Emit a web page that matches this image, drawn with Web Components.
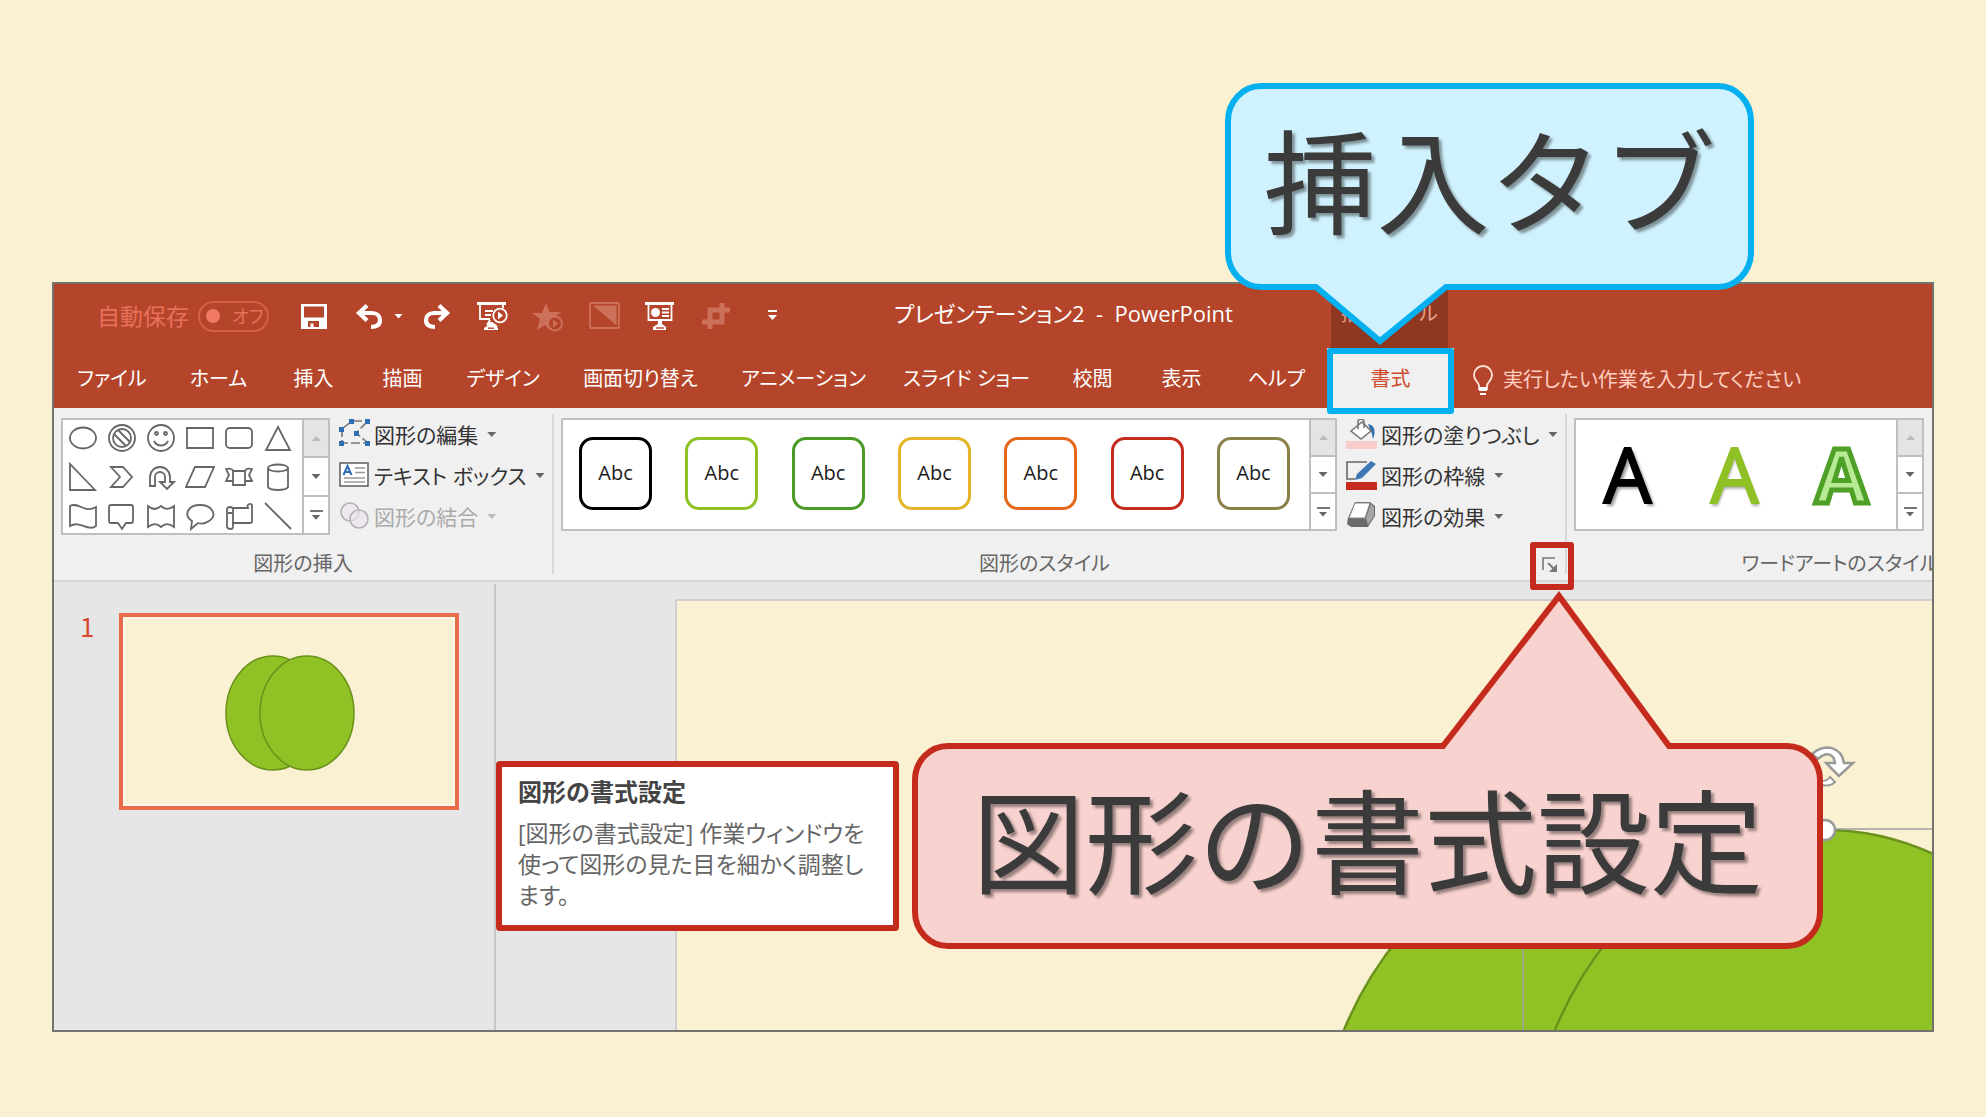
<!DOCTYPE html>
<html lang="ja">
<head>
<meta charset="utf-8">
<title>プレゼンテーション2 - PowerPoint</title>
<style>
  html, body { margin: 0; height: 100%; }
  body {
    background: #faf0d2;
    font-family: "Open Sans", "Noto Sans CJK JP", sans-serif;
    font-feature-settings: "palt";
    font-size: 20px;
    line-height: 30px;
    color: #333;
  }
</style>
</head>
<body>
<tutorial-page></tutorial-page>
<script>
const define = (name, html, setup) => {
  const template = document.createElement('template');
  template.innerHTML = `<style>
    *, *::before, *::after { box-sizing: border-box; }
    :host { display: block; box-sizing: border-box; }
    button, input { font: inherit; font-feature-settings: inherit; color: inherit; background: none; border: 0; padding: 0; margin: 0; }
    svg { display: block; flex: none; }
  </style>` + html;
  customElements.define(name, class extends HTMLElement {
    constructor() {
      super();
      this.attachShadow({ mode: 'open' }).append(template.content.cloneNode(true));
    }
    connectedCallback() { if (setup) setup(this, this.shadowRoot); }
  });
};

/* ---------- icons ---------- */
const icons = {
  save: `<path fill="#fff" fill-rule="evenodd" d="M3 4h26v25H3zM6 6.500v11h20v-11zM10 21v6h2.500v-3.500h3V27H21v-6z"/>`,
  undo: `<path fill="none" stroke="#fff" stroke-width="4.200" d="M4 13h14c5 0 8 3 8 7 0 5-3 7-9 7"/><path fill="none" stroke="#fff" stroke-width="4.200" d="M13 5.500 5 13l8 7.500"/>`,
  redo: `<path fill="none" stroke="#fff" stroke-width="4.200" d="M28 13H14c-5 0-8 3-8 7 0 5 3 7 9 7"/><path fill="none" stroke="#fff" stroke-width="4.200" d="M19 5.500 27 13l-8 7.500"/>`,
  show: `<g fill="none" stroke="#fff" stroke-width="1.800"><path d="M1 3.500h29" stroke-width="3"/><path d="M4 4v15h10M27 4v4M9 11h8M9 15h6M14 20l-3 5M18 24l3 3"/><circle cx="24" cy="15.500" r="6.800"/></g><path fill="#fff" d="M22 11.500v8l5-4zM8 30v-2l3-2 2-4h4l2 4 3 2v2z"/><path d="M12 28.200h6" stroke="#b5452a" stroke-width="1.400"/>`,
  star: `<path fill="#cc705a" d="m14 3 3.500 9H29l-9 7-1 2-1 9-5-5-8 5 3-11-8-6h10z"/><circle cx="23" cy="23.500" r="7" fill="#b5452a" stroke="#cc705a" stroke-width="1.800"/><path fill="#cc705a" d="M21 19.500v8l5-4z"/>`,
  slide: `<rect x="2" y="3" width="29" height="25" rx="1" fill="none" stroke="#cc705a" stroke-width="1.800"/><path fill="#cc705a" d="M5 5.500h23.500v20z"/>`,
  present: `<path d="M1 3.500h29" stroke="#fff" stroke-width="3"/><path d="M4.500 4v16h23V4M18 9h7M18 12.500h7M18 16h7" fill="none" stroke="#fff" stroke-width="1.800"/><circle cx="11.500" cy="12.500" r="4.500" fill="#fff"/><path fill="#fff" d="M14 20h4v4l4 3v3H9v-3l5-3z"/><path d="M12 28h8" stroke="#b5452a" stroke-width="1.400"/>`,
  crop: `<path d="M10 29V10h20M22 3v19H2" fill="none" stroke="#cc705a" stroke-width="5"/><path d="M23 10V3" stroke="#cc705a" stroke-width="2"/>`,
  more: `<path fill="#fff" d="M12 10h9v2h-9zM12 15h9l-4.500 5z"/>`,
  editPoints: `<g stroke="#777" stroke-width="1.600" fill="none"><path d="M3 10 13 2M14 2h13M28 3 17 14l11 9M3 9v15h25" stroke-dasharray="9 3"/></g><g fill="#2f6eb0"><path d="M10 0h5v5h-5zM26 0h5v5h-5zM0 8h5v5H0zM15 12h5v5h-5zM0 22h5v5H0zM26 22h5v5h-5z"/></g>`,
  textBox: `<rect x="1" y="3" width="28" height="23" fill="#fff" stroke="#666" stroke-width="1.600"/><path d="M16 8h10M16 12.500h10M5 18h21M5 22h21" stroke="#999" stroke-width="1.500"/><path d="m4.500 15 4-9 4 9M6 12h5" stroke="#2f6eb0" stroke-width="2" fill="none"/>`,
  merge: `<g fill="#ebe4eb" fill-opacity=".7" stroke="#b5aeb5" stroke-width="1.600"><circle cx="11" cy="11" r="9"/><circle cx="20" cy="18" r="9"/></g>`,
  fill: `<path fill="#f8cdc9" d="M0 22h31v8H0z"/><path fill="#2f6eb0" d="M22 5c7 1 8 8 5 15-1-6-2-8-5-15z"/><path fill="#fff" stroke="#777" stroke-width="1.600" d="m5 12 11-9 9 9-10 8z"/><path d="M12 10V3c0-4 6-4 6 0v6" fill="none" stroke="#777" stroke-width="1.600"/>`,
  outline: `<path fill="#c42b1c" d="M0 22h31v8H0z"/><path d="M21 2H1v17h8" fill="none" stroke="#666" stroke-width="1.600"/><path fill="#3f77b5" d="m9 20 2-6L25 1l5 3-14 14z"/>`,
  effects: `<path fill="#6b6b6b" d="M2 17 9 1h15l5 4v10l-7 11H5l-4-3z"/><path fill="#fff" stroke="#888" d="M9 2h15l-5 15H3z"/><path fill="#a5a5a5" d="m25 3 3 3v9l-6 9-2-7z"/>`,
  bulb: `<path d="M12 25v-3c0-4-5-5-5-11a9 9 0 0 1 18 0c0 6-5 7-5 11v3z" fill="none" stroke="#ffe3da" stroke-width="1.800"/><path fill="#fff" d="M12 23h8v4h-8zM13 29h6v2h-6z"/>`,
  launcher: `<path d="M1 13V1h12" fill="none" stroke="#777" stroke-width="1.600"/><path d="m6 6 7 7" stroke="#777" stroke-width="1.800"/><path fill="#777" d="M15 7v8H7z"/>`,
};
define('ui-icon', `<style>:host { flex: none; }</style>`, (host, root) => {
  const s = host.getAttribute('size') || 32;
  host.style.width = host.style.height = s + 'px';
  const box = document.createElement('div');
  box.innerHTML = `<svg width="${s}" height="${s}" viewBox="0 0 ${s} ${s}" aria-hidden="true">${icons[host.getAttribute('name')]}</svg>`;
  root.append(box);
});

define('caret-mark', `<style>:host { width: 9px; height: 5px; background: currentColor; clip-path: polygon(0 0, 100% 0, 50% 100%); flex: none; }</style>`);

/* ---------- title bar ---------- */
define('title-bar', `<style>
  :host { display: flex; height: 64px; color: #fff; }
  .main { width: 1277px; flex: none; display: flex; align-items: center; padding-left: 43px; }
  .auto { display: flex; align-items: center; gap: 12px; color: #e8705a; font-size: 23px; margin-right: 29px; }
  .auto span { width: 89px; white-space: nowrap; }
  .toggle { width: 71px; height: 31px; border: 2px solid #d75f45; border-radius: 16px; display: flex; align-items: center; gap: 12px; padding-left: 6px; font-size: 18px; line-height: 26px; white-space: nowrap; }
  .toggle::before { content: ""; width: 14px; height: 14px; border-radius: 50%; background: #f07a64; flex: none; }
  .quick { display: flex; align-items: center; gap: 24px; }
  .pair { display: flex; align-items: center; }
  .pair button:nth-child(2) { margin: 0 14px 0 8px; width: 12px; }
  h1 { flex: 1; margin: 0; padding: 0 0 6px 8px; text-align: center; font-size: 22px; font-weight: 400; white-space: pre; }
  .context { width: 117px; background: #8f3720; color: #e6a08c; display: flex; justify-content: center; padding-top: 15px; }
</style>
<div class="main">
  <div class="auto"><span id="auto">自動保存</span><button class="toggle" role="switch" aria-checked="false" aria-labelledby="auto">オフ</button></div>
  <div class="quick">
    <button aria-label="上書き保存"><ui-icon name="save"></ui-icon></button>
    <div class="pair"><button aria-label="元に戻す"><ui-icon name="undo"></ui-icon></button><button aria-label="元に戻す履歴"><caret-mark></caret-mark></button><button aria-label="やり直し"><ui-icon name="redo"></ui-icon></button></div>
    <button aria-label="先頭から開始"><ui-icon name="show"></ui-icon></button>
    <button aria-label="アニメーション"><ui-icon name="star"></ui-icon></button>
    <button aria-label="画面切り替え"><ui-icon name="slide"></ui-icon></button>
    <button aria-label="発表者ツール"><ui-icon name="present"></ui-icon></button>
    <button aria-label="トリミング"><ui-icon name="crop"></ui-icon></button>
    <button aria-label="クイック アクセス"><ui-icon name="more"></ui-icon></button>
  </div>
  <h1>プレゼンテーション2  -  PowerPoint</h1>
</div>
<div class="context">描画ツール</div>`);

/* ---------- tabs ---------- */
define('tab-strip', `<style>
  :host { display: flex; height: 60px; padding-left: 2px; color: #fff; }
  nav { display: flex; }
  nav button { text-align: center; white-space: nowrap; padding-top: 2px; }
  .t2 { width: 89px; } .t3 { width: 101px; } .t4 { width: 112px; } .t6 { width: 163px; }
  .active { position: relative; z-index: 2; width: 127px; background: #f0f0f0; color: #d04a2c; }
  .active::after { content: ""; position: absolute; inset: 0 0 -6px 0; border: 6px solid #05b0f0; border-radius: 3px; }
  label { display: flex; align-items: center; flex: 1; padding: 4px 0 0 13px; gap: 4px; }
  input { flex: 1; min-width: 0; outline: 0; height: 30px; }
  input::placeholder { color: #ffcfc2; opacity: 1; }
</style>
<nav role="tablist">
  <button role="tab" class="t4">ファイル</button><button role="tab" class="t3">ホーム</button><button role="tab" class="t2">挿入</button><button role="tab" class="t2">描画</button><button role="tab" class="t4">デザイン</button><button role="tab" class="t6">画面切り替え</button><button role="tab" class="t6">アニメーション</button><button role="tab" class="t6">スライド ショー</button><button role="tab" class="t2">校閲</button><button role="tab" class="t2">表示</button><button role="tab" class="t3">ヘルプ</button><button role="tab" class="active" aria-selected="true">書式</button>
</nav>
<label><ui-icon name="bulb"></ui-icon><input type="text" aria-label="操作アシスト" placeholder="実行したい作業を入力してください"></label>`);

/* ---------- ribbon pieces ---------- */
define('gallery-box', `<style>
  :host { display: flex; background: #fff; border-radius: 1px; box-shadow: inset 0 0 0 2px #bfbfbf; height: 113px; margin-top: 4px; flex: none; }
  .items { flex: 1; display: flex; min-width: 0; }
  .scroll { width: 28px; display: flex; flex-direction: column; border: 2px solid #bfbfbf; }
  .scroll button { flex: 1; display: flex; flex-direction: column; gap: 3px; align-items: center; justify-content: center; color: #666; }
  .scroll button + button { border-top: 2px solid #bfbfbf; }
  .scroll .up { background: #e4e4e4; }
  .up caret-mark { rotate: 180deg; color: #bbb; }
  i { width: 13px; height: 2px; background: #777; }
</style>
<div class="items"><slot></slot></div>
<div class="scroll"><button class="up" aria-label="上へ"><caret-mark></caret-mark></button><button aria-label="下へ"><caret-mark></caret-mark></button><button aria-label="その他"><i></i><caret-mark></caret-mark></button></div>`);

const shapes = [
  ['楕円', '<ellipse cx="15" cy="15" rx="13" ry="10.500"/>'],
  ['禁止', '<circle cx="15" cy="15" r="13"/><circle cx="15" cy="15" r="9"/><path d="M7 11l12 12M11 7l12 12"/>'],
  ['スマイル', '<circle cx="15" cy="15" r="13"/><circle cx="10.500" cy="10.500" r="1.500"/><circle cx="19.500" cy="10.500" r="1.500"/><path d="M8 18c3 6 11 6 14 0"/>'],
  ['四角形', '<path d="M2 5h26v20H2z"/>'],
  ['角丸四角形', '<rect x="2" y="5" width="26" height="20" rx="4"/>'],
  ['三角形', '<path d="M15 4l12 23H3z"/>'],
  ['直角三角形', '<path d="M2 2v26h25z"/>'],
  ['山形', '<path d="M4 5h12l9 10-9 10H4l9-10z"/>'],
  ['Uターン矢印', '<path d="M4 24V15a10 10 0 0 1 20 0v5h4l-7 7-7-7h5v-5a5 5 0 0 0-10 0v9z"/>'],
  ['平行四辺形', '<path d="M10 5h19l-9 20H1z"/>'],
  ['リボン', '<path d="M9 9v14h12V9zM9 19H2l3-6-3-6c3-1 7 0 7 2M21 19h7l-3-6 3-6c-3-1-7 0-7 2"/>'],
  ['円柱', '<ellipse cx="15" cy="6" rx="10" ry="3.500"/><path d="M5 6v19c2 4 18 4 20 0V6"/>'],
  ['波', '<path d="M2 5c8-5 14 8 26 1v19c-8 6-16-6-26 0z"/>'],
  ['四角形吹き出し', '<path d="M4 4h20q2 0 2 2v14q0 2-2 2h-5l-4 6-4-6H4q-2 0-2-2V6q0-2 2-2z"/>'],
  ['小波', '<path d="M2 5c5 4 8 4 13 0 4 4 8 4 13 0v21c-5-4-9-4-13 0-4-4-8-4-13 0z"/>'],
  ['円形吹き出し', '<path d="M7 20C-2 14 3 4 15 4s18 10 9 16c-4 3-8 3-11 2l-7 6z"/>'],
  ['巻物', '<path d="M8 7h16c-2-4 3-5 4-3v16q0 2-2 2H8M7 28c-3 0-4-1-4-3V9c0-4 6-4 6 0v16c0 2-1 3-2 3M4 12h5"/>'],
  ['線', '<path d="M2 2l26 26"/>'],
];
define('shape-gallery', `<style>
  gallery-box { height: 117px; width: 269px; }
  .grid { display: grid; grid-template: repeat(3, 39px) / repeat(6, 39px); padding-left: 2px; }
  button { display: grid; place-items: center; }
  svg { fill: none; stroke: #666; stroke-width: 1.800; }
</style><gallery-box><div class="grid"></div></gallery-box>`, (h, root) => {
  root.querySelector('.grid').innerHTML = shapes.map(([n, d]) => `<button aria-label="${n}"><svg width="30" height="30" viewBox="0 0 30 30">${d}</svg></button>`).join('');
});

define('style-gallery', `<style>
  gallery-box { width: 776px; }
  .row { flex: 1; display: flex; justify-content: space-between; align-items: center; padding: 0 19px 2px 18px; }
  button { width: 73px; height: 73px; border: 3px solid; border-radius: 14px; color: var(--c); padding-bottom: 2px; }
  span { color: #1c1c1c; }
</style><gallery-box><div class="row"></div></gallery-box>`, (h, root) => {
  root.querySelector('.row').innerHTML = ['#000', '#8fc126', '#4c9a26', '#e3b526', '#e3681e', '#c42b1c', '#8a8148']
    .map(c => `<button style="--c:${c}"><span>Abc</span></button>`).join('');
});
customElements.get('gallery-box');

define('wordart-gallery', `<style>
  gallery-box { width: 350px; }
  button { width: 107px; font-size: 76px; line-height: 109px; padding-bottom: 3px; -webkit-text-stroke: 2px currentColor; }
  .k { color: #000; text-shadow: 3px 3px 3px #0006; }
  .g { color: #8fc126; text-shadow: 1px 3px 3px #0005; }
  .o { color: #b8ea96; font-weight: 700; -webkit-text-stroke: 5px #4ea126; }
</style><gallery-box><button class="k">A</button><button class="g">A</button><button class="o">A</button></gallery-box>`);

define('icon-menu', `<style>:host([disabled]) { color: #aaa; }</style>`, (h, root) => {
  const box = document.createElement('div');
  box.innerHTML = `<style>
    button { display: flex; align-items: center; height: 41px; gap: 3px; white-space: nowrap; font-size: 21px; }
    caret-mark { margin-left: 6px; color: #666; }
    button:disabled caret-mark { color: #bbb; }
  </style><button ${h.hasAttribute('disabled') ? 'disabled' : ''}><ui-icon name="${h.getAttribute('icon')}"></ui-icon><slot></slot><caret-mark></caret-mark></button>`;
  root.append(box);
});

define('ribbon-group', `<style>
  :host { display: flex; flex-direction: column; flex: none; padding-top: 6px; position: relative; }
  .body { display: flex; height: 134px; gap: 9px; padding-left: 7px; }
  .foot { display: flex; height: 32px; }
  .name { flex: 1; text-align: center; color: #666; line-height: 32px; white-space: nowrap; }
  .menus { display: flex; flex-direction: column; }
</style>
<div class="body"><slot></slot><div class="menus"><slot name="menu"></slot></div></div>
<div class="foot"><div class="name"><slot name="label"></slot></div><slot name="launcher"></slot></div>`);

define('dialog-launcher', `<style>
  :host { width: 30px; height: 32px; position: relative; z-index: 2; }
  button { display: grid; place-items: center; width: 30px; height: 32px; padding-top: 2px; }
  button::after { content: ""; position: absolute; inset: -6px -9px -10px -5px; border: 6px solid #c42b1c; border-radius: 3px; }
</style><button aria-label="図形の書式設定"><ui-icon name="launcher" size="16"></ui-icon></button>`);

define('ribbon-bar', `<style>
  :host { display: flex; height: 174px; background: #f0f0f0; border-bottom: 2px solid #d4d4d4; }
  hr { width: 2px; margin: 6px 0; border: 0; background: #d8d8d8; flex: none; }
  .insert { width: 498px; } .styles { width: 1011px; } .art { width: 546px; }
  .clip { flex: 1; min-width: 0; overflow: hidden; }
</style>
<ribbon-group class="insert"><shape-gallery></shape-gallery>
  <icon-menu slot="menu" icon="editPoints">図形の編集</icon-menu><icon-menu slot="menu" icon="textBox">テキスト ボックス</icon-menu><icon-menu slot="menu" icon="merge" disabled>図形の結合</icon-menu>
  <span slot="label">図形の挿入</span></ribbon-group>
<hr>
<ribbon-group class="styles"><style-gallery></style-gallery>
  <icon-menu slot="menu" icon="fill">図形の塗りつぶし</icon-menu><icon-menu slot="menu" icon="outline">図形の枠線</icon-menu><icon-menu slot="menu" icon="effects">図形の効果</icon-menu>
  <span slot="label">図形のスタイル</span><dialog-launcher slot="launcher"></dialog-launcher></ribbon-group>
<hr>
<div class="clip"><ribbon-group class="art"><wordart-gallery></wordart-gallery><span slot="label">ワードアートのスタイル</span></ribbon-group></div>`);

/* ---------- work area ---------- */
define('slide-list', `<style>
  :host { width: 442px; flex: none; display: flex; align-items: flex-start; padding: 29px 0 0 26px; margin-top: 2px; border-right: 2px solid #c6c6c6; gap: 26px; }
  b { width: 13px; font: 400 26px/26px "Noto Sans CJK JP", sans-serif; color: #d8492f; }
  button { width: 340px; height: 197px; border: 4px solid #ea6b4c; background: #faf0d2; box-shadow: inset 0 0 0 2px #fff8ea; }
</style>
<b>1</b>
<button aria-label="スライド 1"><svg width="332" height="189"><g fill="#90c226" stroke="#6a911b" stroke-width="1.500"><ellipse cx="150" cy="96" rx="47" ry="57"/><ellipse cx="184" cy="96" rx="47" ry="57"/></g></svg></button>`);

define('slide-stage', `<style>
  :host { flex: 1; min-width: 0; padding: 17px 0 0 179px; display: flex; }
  .slide { flex: 1; min-width: 0; background: #faf0d2; border: 2px solid #cfcfcf; border-width: 2px 0 0 2px; overflow: hidden; }
</style>
<div class="slide"><svg width="1256" height="431" viewBox="677 601 1256 431">
  <g fill="#90c226" stroke="#6a911b" stroke-width="2.500"><ellipse cx="1614" cy="1192" rx="302" ry="362"/><ellipse cx="1825" cy="1192" rx="302" ry="362"/></g>
  <path d="M1523 1040V829H1940" fill="none" stroke="#a0a0a0" stroke-width="1.500"/>
  <path d="M1812 754c14-12 30-6 32 9h9l-14 13-13-13h9c-1-9-8-12-17-4z" fill="#fff" stroke="#999" stroke-width="2.500"/>
  <path d="M1818 780c6 2 9 1 12-3l5 5c-4 4-11 4-17 2z" fill="#fff" stroke="#999" stroke-width="2"/>
  <circle cx="1825" cy="830" r="10" fill="#fff" stroke="#999" stroke-width="2.500"/>
</svg></div>`);

define('app-window', `<style>
  :host { display: flex; flex-direction: column; border: 2px solid #73736e; background: #e6e6e6; min-width: 0; overflow: hidden; }
  header { background: #b5452a; }
  .work { flex: 1; display: flex; min-height: 0; }
</style>
<header><title-bar></title-bar><tab-strip></tab-strip></header>
<ribbon-bar></ribbon-bar>
<div class="work"><slide-list></slide-list><slide-stage></slide-stage></div>`);

/* ---------- annotations ---------- */
define('screen-tip', `<style>
  :host { position: absolute; left: 496px; top: 761px; width: 403px; height: 170px; border: 6px solid #c42b1c; border-radius: 4px; background: #fff; padding: 9px 16px; color: #666; font-size: 23px; line-height: 31px; white-space: nowrap; }
  h2 { margin: 0 0 11px; font-size: 24px; line-height: 31px; color: #444; font-feature-settings: normal; }
  p { margin: 0; }
</style><h2>図形の書式設定</h2><p>[図形の書式設定] 作業ウィンドウを<br>使って図形の見た目を細かく調整し<br>ます。</p>`);

define('call-out', `<style>
  :host { position: absolute; z-index: 3; color: #3b3b3b; font-size: 113px; line-height: 186px; text-align: center; white-space: nowrap; font-feature-settings: normal; font-family: "Noto Sans CJK JP", sans-serif; text-shadow: 3px 3px 3px #0006; }
  :host([kind="tab"]) { left: 1225px; top: 83px; width: 529px; height: 262px; }
  :host([kind="dialog"]) { left: 912px; top: 591px; width: 911px; height: 358px; padding-top: 152px; }
  svg { position: absolute; inset: 0; overflow: visible; }
  path { stroke-width: 6; }
  :host([kind="tab"]) .d, :host([kind="dialog"]) .t { display: none; }
  span { position: relative; }
</style>
<svg width="100%" height="100%"><path class="t" fill="#d0f2fe" stroke="#05b0f0" d="M36 3H493A33 35 0 0 1 526 38V170A33 35 0 0 1 493 204H221L155 258 91 204H36A33 35 0 0 1 3 170V38A33 35 0 0 1 36 3z"/>
<path class="d" fill="#f8d2ce" stroke="#c42b1c" d="M36 155H531L647 5 757 155H875A33 34 0 0 1 908 189V321A33 34 0 0 1 875 355H36A33 34 0 0 1 3 321V189A33 34 0 0 1 36 155z"/></svg>
<span><slot></slot></span>`);

define('tutorial-page', `<style>
  :host { position: relative; display: flex; flex-direction: column; height: 100vh; padding: 282px 52px 85px; overflow: hidden; }
  app-window { flex: 1; }
</style>
<app-window></app-window>
<screen-tip></screen-tip>
<call-out kind="tab">挿入タブ</call-out>
<call-out kind="dialog">図形の書式設定</call-out>`);
</script>
</body>
</html>
